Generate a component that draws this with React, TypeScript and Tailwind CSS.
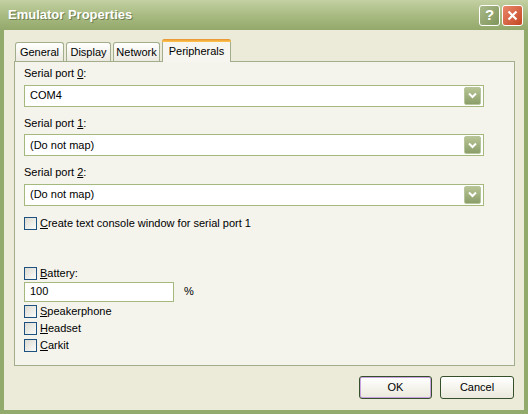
import React from 'react';

const font = { fontFamily: 'Tahoma, "Liberation Sans", "DejaVu Sans", sans-serif' };

const Chevron = () => (
  <svg width="9" height="7" viewBox="0 0 9 7">
    <path d="M1 1.5 L4.5 5 L8 1.5" fill="none" stroke="#fff" strokeWidth="2" />
  </svg>
);

const Combo = ({ value }: { value: string }) => (
  <div className="flex h-[22px] w-[460px] items-center justify-between border border-[#a5b97f] bg-white pl-[5px] pr-[2px]">
    <span className="text-[11px] text-black">{value}</span>
    <div className="flex h-[18px] w-[17px] items-center justify-center rounded-[2px] border border-[#b7c69a] bg-gradient-to-b from-[#b6c493] to-[#8b9e6a]">
      <Chevron />
    </div>
  </div>
);

const Check = ({ label, u }: { label: string; u: string }) => (
  <label className="flex h-[17px] items-center gap-[3px] text-[11px] text-black">
    <span className="h-[13px] w-[13px] border border-[#1c5180] bg-gradient-to-br from-[#dcdbd3] to-[#fbfbf9]" />
    <span>
      <span className="underline">{u}</span>
      {label}
    </span>
  </label>
);

const Field = ({ n, value }: { n: string; value: string }) => (
  <div className="flex flex-col gap-[3px]">
    <span className="text-[11px] text-black">
      Serial port <span className="underline">{n}</span>:
    </span>
    <Combo value={value} />
  </div>
);

const Tab = ({ label, w }: { label: string; w: string }) => (
  <div
    className={`mt-[3px] mr-[2px] flex h-[19px] items-center justify-center rounded-t-[3px] border border-b-0 border-[#a2ae8b] bg-gradient-to-b from-white to-[#eceae0] text-[11px] text-black ${w}`}
  >
    {label}
  </div>
);

export default function App() {
  return (
    <div className="flex h-[414px] w-[528px] flex-col bg-[#92aa6c]" style={font}>
      <div className="flex h-[30px] shrink-0 items-center justify-between bg-gradient-to-b from-[#c3d0a3] via-[#a9bb82] to-[#93a86b] pl-[8px] pr-[5px]">
        <span className="text-[13px] font-bold text-white [text-shadow:1px_1px_0_#6f7f4f]">
          Emulator Properties
        </span>
        <div className="flex gap-[2px]">
          <div className="flex h-[21px] w-[21px] items-center justify-center rounded-[3px] border border-white bg-gradient-to-br from-[#a9b98a] to-[#7f9559] text-[15px] font-bold text-white">
            ?
          </div>
          <div className="flex h-[21px] w-[21px] items-center justify-center rounded-[3px] border border-white bg-gradient-to-br from-[#e9876a] to-[#c4451f]">
            <svg width="11" height="11" viewBox="0 0 11 11">
              <path d="M1.5 1.5 L9.5 9.5 M9.5 1.5 L1.5 9.5" stroke="#fff" strokeWidth="2.2" />
            </svg>
          </div>
        </div>
      </div>

      <div className="mx-[4px] mb-[4px] flex flex-1 flex-col bg-[#ecead9] pl-[10px] pr-[9px] pt-[9px]">
        <div className="flex items-end pl-[1px]">
          <Tab label="General" w="w-[49px]" />
          <Tab label="Display" w="w-[45px]" />
          <Tab label="Network" w="w-[47px]" />
          <div className="relative -mb-px flex h-[23px] w-[69px] items-center justify-center rounded-t-[3px] border border-b-0 border-[#a2ae8b] bg-[#f6f5ef] text-[11px] text-black">
            <div className="absolute -left-px -right-px -top-px h-[3px] rounded-t-[3px] bg-gradient-to-b from-[#e6902e] to-[#ffc74f]" />
            Peripherals
          </div>
        </div>

        <div className="flex h-[305px] flex-col border border-[#a2ae8b] bg-[#f4f3ec] pl-[9px] pt-[3px]">
          <div className="flex flex-col gap-[8px]">
            <Field n="0" value="COM4" />
            <Field n="1" value="(Do not map)" />
            <Field n="2" value="(Do not map)" />
          </div>
          <div className="mt-[9px]">
            <Check u="C" label="reate text console window for serial port 1" />
          </div>
          <div className="mt-[33px] flex flex-col">
            <Check u="B" label="attery:" />
            <div className="flex items-center gap-[10px]">
              <div className="flex h-[20px] w-[150px] items-center border border-[#a5b97f] bg-white pl-[5px] text-[11px] text-black">
                100
              </div>
              <span className="text-[11px] text-black">%</span>
            </div>
            <div className="mt-[1px] flex flex-col">
              <Check u="S" label="peakerphone" />
              <Check u="H" label="eadset" />
              <Check u="C" label="arkit" />
            </div>
          </div>
        </div>

        <div className="mt-[10px] flex justify-end gap-[8px] pr-[1px]">
          <button className="h-[23px] w-[73px] rounded-[3px] border border-[#37502c] bg-gradient-to-b from-white to-[#ebe9dc] text-[11px] text-black shadow-[inset_0_0_0_1px_#c8a2e0]">
            OK
          </button>
          <button className="h-[23px] w-[74px] rounded-[3px] border border-[#37502c] bg-gradient-to-b from-white to-[#ebe9dc] text-[11px] text-black">
            Cancel
          </button>
        </div>
      </div>
    </div>
  );
}
